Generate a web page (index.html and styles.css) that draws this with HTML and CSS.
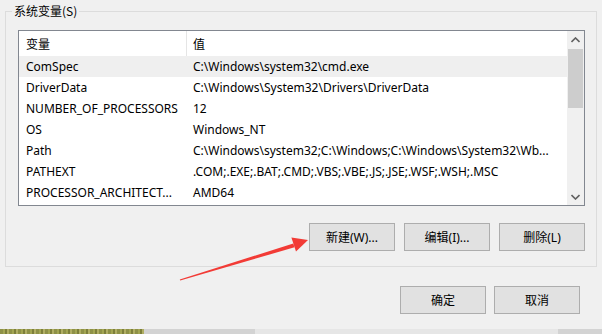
FILE: index.html
```html
<!DOCTYPE html>
<html lang="zh-CN">
<head>
<meta charset="utf-8">
<title>系统变量</title>
<link rel="stylesheet" href="styles.css">
</head>
<body>
<div class="dialog">
  <div class="group">
    <span class="group-label">系统变量(S)</span>
    <div class="listview">
      <div class="list-main">
        <div class="row header">
          <div class="cell name">变量</div>
          <div class="cell value">值</div>
        </div>
        <div class="row selected">
          <div class="cell name">ComSpec</div>
          <div class="cell value">C:\Windows\system32\cmd.exe</div>
        </div>
        <div class="row">
          <div class="cell name">DriverData</div>
          <div class="cell value">C:\Windows\System32\Drivers\DriverData</div>
        </div>
        <div class="row">
          <div class="cell name">NUMBER_OF_PROCESSORS</div>
          <div class="cell value">12</div>
        </div>
        <div class="row">
          <div class="cell name">OS</div>
          <div class="cell value">Windows_NT</div>
        </div>
        <div class="row">
          <div class="cell name">Path</div>
          <div class="cell value">C:\Windows\system32;C:\Windows;C:\Windows\System32\Wb...</div>
        </div>
        <div class="row">
          <div class="cell name">PATHEXT</div>
          <div class="cell value">.COM;.EXE;.BAT;.CMD;.VBS;.VBE;.JS;.JSE;.WSF;.WSH;.MSC</div>
        </div>
        <div class="row">
          <div class="cell name">PROCESSOR_ARCHITECT...</div>
          <div class="cell value">AMD64</div>
        </div>
      </div>
      <div class="scrollbar">
        <div class="sb-arrow">
          <svg width="9" height="6" viewBox="0 0 9 6"><path d="M0.5 5 L4.5 1 L8.5 5" fill="none" stroke="#606060" stroke-width="1.6"/></svg>
        </div>
        <div class="sb-track">
          <div class="sb-thumb"></div>
        </div>
        <div class="sb-arrow">
          <svg width="9" height="6" viewBox="0 0 9 6"><path d="M0.5 1 L4.5 5 L8.5 1" fill="none" stroke="#606060" stroke-width="1.6"/></svg>
        </div>
      </div>
    </div>
    <div class="group-buttons">
      <button class="btn">新建(W)...</button>
      <button class="btn">编辑(I)...</button>
      <button class="btn">删除(L)</button>
    </div>
  </div>
  <div class="dialog-buttons">
    <button class="btn">确定</button>
    <button class="btn">取消</button>
  </div>
  <div class="taskstrip">
    <div class="grass"></div>
    <div class="strip-a"></div>
    <div class="strip-b"></div>
    <div class="strip-c"></div>
  </div>
  <svg class="arrow" width="602" height="334" viewBox="0 0 602 334">
    <polygon points="179.8,279.5 180.2,280.5 294.5,247.3 293.3,243.5" fill="#f23b36"/>
    <polygon points="308,240 291.4,237.6 296,251.4" fill="#f23b36"/>
  </svg>
</div>
</body>
</html>
```
FILE: styles.css
```css
html, body {
  margin: 0;
  padding: 0;
}
body {
  width: 602px;
  height: 334px;
  overflow: hidden;
  background: #f0f0f0;
  font-family: "Noto Sans", "Noto Sans CJK SC", sans-serif;
  font-size: 12px;
  color: #000;
}
.dialog {
  position: relative;
  width: 602px;
  height: 334px;
  padding-top: 11px;
  box-sizing: border-box;
}
.group {
  position: relative;
  margin-left: 5px;
  width: 592px;
  height: 256px;
  box-sizing: border-box;
  border: 1px solid #dcdcdc;
  padding: 18px 0 0 12px;
}
.group-label {
  position: absolute;
  left: 6px;
  top: -10px;
  padding: 0 2px;
  background: #f0f0f0;
  line-height: 18px;
  font-family: "Noto Sans CJK SC", sans-serif;
  font-size: 12px;
}
.listview {
  display: flex;
  width: 567px;
  height: 176px;
  box-sizing: border-box;
  border: 1px solid #828790;
  background: #fff;
}
.list-main {
  width: 548px;
  display: flex;
  flex-direction: column;
}
.row {
  display: flex;
  height: 21px;
  align-items: center;
  white-space: nowrap;
}
.row.header {
  height: 25px;
  align-items: stretch;
}
.row.header .cell {
  display: flex;
  align-items: center;
  font-family: "Noto Sans CJK SC", sans-serif;
}
.row.header .name {
  border-right: 1px solid #e5e5e5;
}
.row.selected {
  background: #efefef;
}
.cell {
  overflow: hidden;
}
.cell.name {
  width: 168px;
  padding-left: 7px;
  box-sizing: border-box;
  flex: none;
}
.cell.value {
  padding-left: 6px;
  flex: 1;
}
.scrollbar {
  width: 17px;
  display: flex;
  flex-direction: column;
  background: #f0f0f0;
}
.sb-arrow {
  height: 17px;
  display: flex;
  align-items: center;
  justify-content: center;
}
.sb-track {
  flex: 1;
  padding: 1px 1px 0 1px;
}
.sb-thumb {
  height: 59px;
  background: #cdcdcd;
}
.group-buttons {
  display: flex;
  justify-content: flex-end;
  gap: 9px;
  width: 567px;
  margin-top: 17px;
}
.btn {
  width: 86px;
  height: 28px;
  box-sizing: border-box;
  border: 1px solid #adadad;
  background: #e1e1e1;
  font-family: "Noto Sans", "Noto Sans CJK SC", sans-serif;
  font-size: 12px;
  color: #000;
  padding: 0;
  margin: 0;
}
.dialog-buttons {
  display: flex;
  justify-content: flex-end;
  gap: 8px;
  margin-top: 19px;
  padding-right: 22px;
}
.taskstrip {
  position: absolute;
  left: 0;
  right: 0;
  bottom: 0;
  height: 5px;
  display: flex;
}
.grass {
  width: 144px;
  background: repeating-linear-gradient(90deg, #8e9147 0 3px, #a2a552 3px 5px, #7d7f3a 5px 7px, #b0ae64 7px 9px);
}
.strip-a {
  width: 111px;
  background: #d3d3d3;
}
.strip-b {
  flex: 1;
  background: #e6e6e6;
}
.strip-c {
  width: 44px;
  background: #d3d3d3;
}
.arrow {
  position: absolute;
  left: 0;
  top: 0;
  pointer-events: none;
}
```
